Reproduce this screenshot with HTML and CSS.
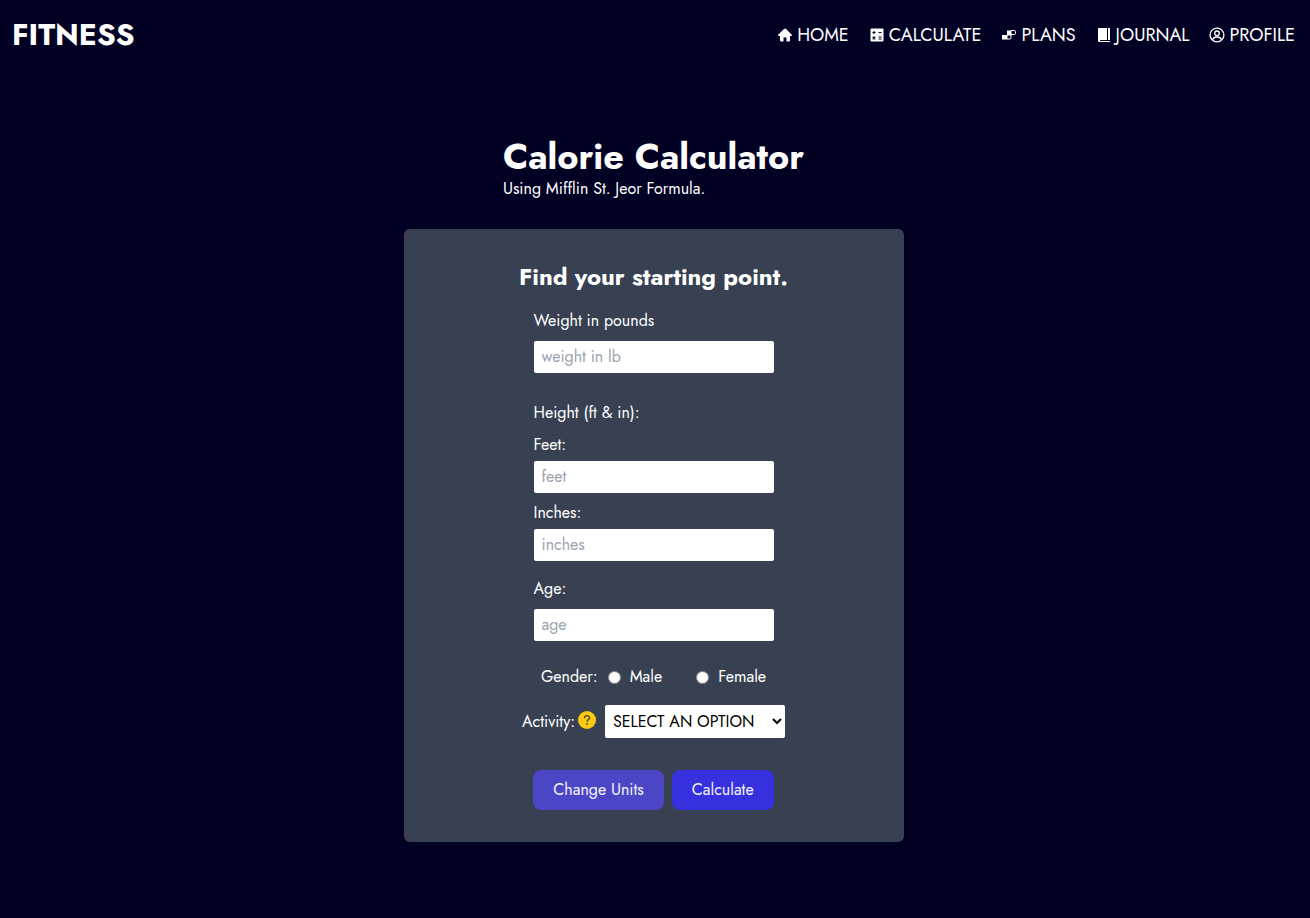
FILE: index.html
```html
<!DOCTYPE html>
<html lang="en">
<head>
<meta charset="utf-8">
<title>Calorie Calculator</title>
<link rel="stylesheet" href="styles.css">
</head>
<body>
<header class="topbar">
  <a class="brand" href="#">FITNESS</a>
  <nav class="menu">
    <a class="menu-link" href="#"><svg class="icon" viewBox="0 0 16 16" fill="currentColor"><path d="M8 1.500q-.5 0-1 .5L1.200 7.800q-.5.900.4 1.200H3v4.500q0 1 1 1h2.500v-4h3v4H12q1 0 1-1V9h1.400q.9-.3.4-1.200L9 2q-.5-.5-1-.5z"/></svg>HOME</a>
    <a class="menu-link" href="#"><svg class="icon" viewBox="0 0 16 16"><path fill="currentColor" d="M2.500 1.500h11q1 0 1 1v11q0 1-1 1h-11q-1 0-1-1v-11q0-1 1-1z"/><path stroke="#020124" stroke-width="1.100" d="M3.500 5.500h3M5 4v3M9.500 5.500h3M3.700 9.700l2.600 2.600M6.300 9.700l-2.600 2.600M9.500 10h3M9.500 12h3"/></svg>CALCULATE</a>
    <a class="menu-link" href="#"><svg class="icon" viewBox="0 0 16 16"><path fill="currentColor" d="M6 3.500h4V8H6zM1 8h5v4.500H1z"/><path fill="none" stroke="currentColor" d="M10 3.500h3.500q1 0 1 1v2q0 1-1 1H10zM6 8h4v3q0 1-1 1H6z"/></svg>PLANS</a>
    <a class="menu-link" href="#"><svg class="icon" viewBox="0 0 16 16" fill="currentColor"><path d="M3 1h8v12H4v1h10v1H3.500Q2 15 2 13.500V2q0-1 1-1zM12 1h2v12h-2z"/></svg>JOURNAL</a>
    <a class="menu-link" href="#"><svg class="icon" viewBox="0 0 16 16" fill="none" stroke="currentColor" stroke-width="1.300"><circle cx="8" cy="8" r="6.900"/><circle cx="8" cy="6.300" r="2.300"/><path d="M3.500 13c.7-2.500 2-3 4.500-3s3.800.5 4.500 3"/></svg>PROFILE</a>
  </nav>
</header>
<main class="page">
  <div class="intro">
    <h1 class="title">Calorie Calculator</h1>
    <p class="subtitle">Using Mifflin St. Jeor Formula.</p>
  </div>
  <form class="card">
    <h2 class="card-title">Find your starting point.</h2>
    <div class="field spaced">
      <label for="weight">Weight in pounds</label>
      <input class="box" id="weight" type="text" placeholder="weight in lb">
    </div>
    <fieldset class="height">
      <legend class="legend">Height (ft &amp; in):</legend>
      <div class="field">
        <label for="feet">Feet:</label>
        <input class="box" id="feet" type="text" placeholder="feet">
      </div>
      <div class="field">
        <label for="inches">Inches:</label>
        <input class="box" id="inches" type="text" placeholder="inches">
      </div>
    </fieldset>
    <div class="field spaced">
      <label for="age">Age:</label>
      <input class="box" id="age" type="text" placeholder="age">
    </div>
    <div class="gender" role="radiogroup" aria-labelledby="gender-label">
      <span id="gender-label">Gender:</span>
      <label class="choice"><input class="radio" type="radio" name="gender">Male</label>
      <label class="choice"><input class="radio" type="radio" name="gender">Female</label>
    </div>
    <div class="activity">
      <label for="activity">Activity:</label>
      <svg class="help" viewBox="0 0 18 18"><circle cx="9" cy="9" r="9" fill="#fdca12"/><path d="M6.500 7.200C6.500 3.800 11.500 3.900 11.500 6.900 11.500 8.600 9 8.700 9 10.700" fill="none" stroke="#4b4635" stroke-width="1.300"/><circle cx="9" cy="13" r=".9" fill="#4b4635"/></svg>
      <select class="select" id="activity"><option>SELECT AN OPTION</option></select>
    </div>
    <div class="actions">
      <button class="btn btn-units" type="button">Change Units</button>
      <button class="btn btn-calc" type="button">Calculate</button>
    </div>
  </form>
</main>
</body>
</html>
```
FILE: styles.css
```css
* { box-sizing: border-box; margin: 0; }

body {
  min-height: 100vh;
  background: #020124;
  color: #fff;
  font: 16px/24px Jost, Lato, sans-serif;
}

.topbar {
  display: flex;
  align-items: center;
  justify-content: space-between;
  padding: 16px 15px 16px 12px;
}

.brand {
  color: inherit;
  font-size: 30px;
  font-weight: 700;
  line-height: 38px;
  text-decoration: none;
}

.menu { display: flex; gap: 20px; }

.menu-link {
  display: flex;
  align-items: center;
  gap: 4px;
  color: inherit;
  font-size: 18px;
  text-decoration: none;
}

.icon { width: 16px; height: 16px; }

.page {
  display: flex;
  flex-direction: column;
  align-items: center;
  gap: 28px;
  padding: 66px 3px 76px 0;
}

.title { font-size: 36px; line-height: 41px; }

.card {
  display: flex;
  flex-direction: column;
  align-items: center;
  width: 500px;
  max-width: 100%;
  padding: 32px;
  border-radius: 6px;
  background: #384152;
}

.card-title {
  margin-bottom: 16px;
  font-size: 24px;
  line-height: 32px;
}

.field {
  display: flex;
  flex-direction: column;
  gap: 4px;
  width: 240px;
}

.spaced { gap: 8px; }

.height {
  display: flex;
  flex-direction: column;
  gap: 8px;
  margin: 28px 0 16px;
  padding: 0;
  border: 0;
}

.legend { padding: 0 0 8px; }

.box {
  width: 100%;
  height: 32px;
  padding: 0 8px 1px;
  border: 0;
  border-radius: 2px;
  background: #fff;
  color: #111827;
  font: inherit;
}

.box::placeholder { color: #9ca3af; }

.gender {
  display: flex;
  gap: 34px;
  margin: 24px 0 16px;
}

.gender > :first-child { margin-right: -24px; }

.choice {
  display: flex;
  align-items: center;
  gap: 9px;
}

.radio { width: 13px; height: 13px; margin: 0; }

.activity { display: flex; align-items: center; }

.help { width: 18px; height: 18px; margin: 0 9px 3px 3px; }

.select {
  width: 180px;
  height: 33px;
  padding: 0 4px;
  border: 0;
  border-radius: 2px;
  background: #fff;
  color: #000;
  font: inherit;
}

.actions { display: flex; gap: 8px; margin-top: 32px; }

.btn {
  height: 40px;
  padding: 0 20px;
  border: 0;
  border-radius: 8px;
  color: #f3f4f6;
  font: inherit;
}

.btn-units { background: #4b46c6; }
.btn-calc { background: #3730de; }
```
